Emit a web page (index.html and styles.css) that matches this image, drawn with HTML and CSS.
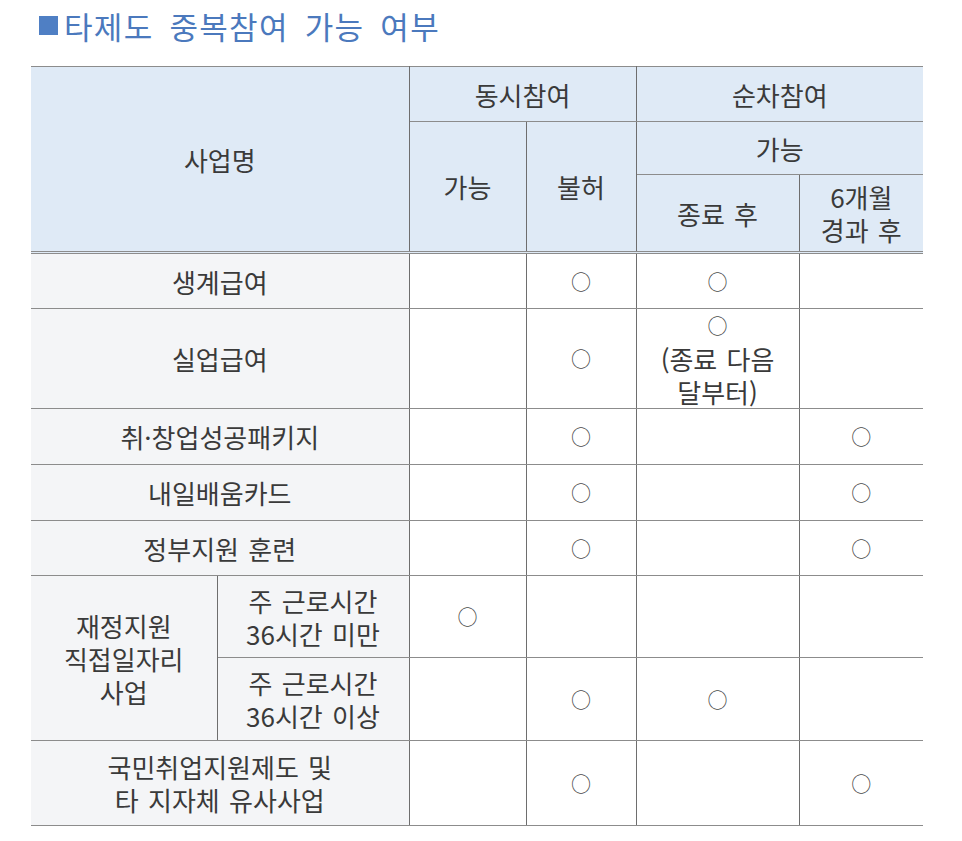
FILE: index.html
```html
<!DOCTYPE html>
<html lang="ko">
<head>
<meta charset="utf-8">
<title>타제도 중복참여 가능 여부</title>
<link rel="stylesheet" href="styles.css">
</head>
<body>
<div class="page">
  <h1 class="title"><span class="square"></span><span class="title-text">타제도 중복참여 가능 여부</span></h1>
  <table class="grid">
    <colgroup>
      <col class="c1a"><col class="c1b"><col class="c2"><col class="c3"><col class="c4"><col class="c5">
    </colgroup>
    <thead>
      <tr class="h1">
        <th rowspan="3" colspan="2" class="first bottom">사업명</th>
        <th colspan="2">동시참여</th>
        <th colspan="2" class="last">순차참여</th>
      </tr>
      <tr class="h2">
        <th rowspan="2" class="bottom">가능</th>
        <th rowspan="2" class="bottom">불허</th>
        <th colspan="2" class="last">가능</th>
      </tr>
      <tr class="h3">
        <th class="bottom">종료 후</th>
        <th class="bottom last">6개월<br>경과 후</th>
      </tr>
    </thead>
    <tbody>
      <tr class="r56">
        <td colspan="2" class="name first">생계급여</td>
        <td></td><td><span class="o">○</span></td><td><span class="o">○</span></td><td class="last"></td>
      </tr>
      <tr class="r100">
        <td colspan="2" class="name first">실업급여</td>
        <td></td><td><span class="o">○</span></td><td><span class="o">○</span><br>(종료 다음<br>달부터)</td><td class="last"></td>
      </tr>
      <tr class="r56">
        <td colspan="2" class="name first">취·창업성공패키지</td>
        <td></td><td><span class="o">○</span></td><td></td><td class="last"><span class="o">○</span></td>
      </tr>
      <tr class="r56">
        <td colspan="2" class="name first">내일배움카드</td>
        <td></td><td><span class="o">○</span></td><td></td><td class="last"><span class="o">○</span></td>
      </tr>
      <tr class="r55">
        <td colspan="2" class="name first">정부지원 훈련</td>
        <td></td><td><span class="o">○</span></td><td></td><td class="last"><span class="o">○</span></td>
      </tr>
      <tr class="r82">
        <td rowspan="2" class="name first">재정지원<br>직접일자리<br>사업</td>
        <td class="name">주 근로시간<br>36시간 미만</td>
        <td><span class="o">○</span></td><td></td><td></td><td class="last"></td>
      </tr>
      <tr class="r83">
        <td class="name">주 근로시간<br>36시간 이상</td>
        <td></td><td><span class="o">○</span></td><td><span class="o">○</span></td><td class="last"></td>
      </tr>
      <tr class="r85">
        <td colspan="2" class="name first">국민취업지원제도 및<br>타 지자체 유사사업</td>
        <td></td><td><span class="o">○</span></td><td></td><td class="last"><span class="o">○</span></td>
      </tr>
    </tbody>
  </table>
</div>
</body>
</html>
```

FILE: styles.css
```css
html, body {
  margin: 0;
  padding: 0;
  background: #ffffff;
}

body {
  font-family: "Noto Sans CJK KR", "Noto Sans", sans-serif;
  color: #333333;
}

.page {
  padding: 5px 0 0 31px;
}

.title {
  display: flex;
  align-items: center;
  margin: 0 0 21px 8px;
  height: 40px;
  font-size: 31px;
  font-weight: 400;
  color: #4b79bd;
  letter-spacing: 1.3px;
  word-spacing: 6px;
}

.square {
  display: inline-block;
  width: 19px;
  height: 19px;
  background: #4f7fc4;
  margin-right: 6px;
}

.grid {
  border-collapse: collapse;
  table-layout: fixed;
  width: 892px;
  font-size: 26px;
  line-height: 33px;
  word-spacing: 2px;
}

.c1a { width: 186px; }
.c1b { width: 192px; }
.c2 { width: 117px; }
.c3 { width: 110px; }
.c4 { width: 163px; }
.c5 { width: 124px; }

.grid th,
.grid td {
  padding: 0;
  text-align: center;
  vertical-align: middle;
  font-weight: 400;
  border-top: 1px solid #8c8c8c;
  border-bottom: 1px solid #8c8c8c;
  border-left: 1px solid #6e6e6e;
  border-right: 1px solid #6e6e6e;
  color: #3a3a3a;
}

.grid th {
  background: #dfeaf6;
}

.grid .first { border-left: none; }
.grid .last { border-right: none; }

.grid th.bottom {
  border-bottom: 3px double #8c8c8c;
}

.grid td {
  background: #ffffff;
}

.grid td.name {
  background: #f4f5f7;
}

.o {
  font-size: 20px;
  line-height: 20px;
  vertical-align: 3px;
  color: #4a4a4a;
}

.h1 { height: 55px; }
.h2 { height: 53px; }
.h3 { height: 78px; }

.r56 { height: 56px; }
.r55 { height: 55px; }
.r100 { height: 100px; }
.r82 { height: 82px; }
.r83 { height: 83px; }
.r85 { height: 85px; }
```
